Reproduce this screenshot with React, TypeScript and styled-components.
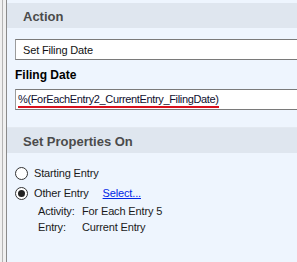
import { createGlobalStyle } from "styled-components";
import styled from "styled-components";

const GlobalStyle = createGlobalStyle`
    html, body {
        margin: 0;
        padding: 0;
        background: #f0f0f0;
    }
    body {
        font-family: "Liberation Sans", Arial, sans-serif;
        font-size: 11px;
        letter-spacing: -0.15px;
        color: #1a1a1a;
    }
`;

const Shell = styled.div`
    display: flex;
    height: 262px;
    width: 297px;
    overflow: hidden;
    padding-left: 2px;
    box-sizing: border-box;
`;

const Rail = styled.div`
    display: flex;
    flex: 1;
    border-left: 1px solid #b4b4b4;
    padding-left: 3px;
`;

const Panel = styled.div`
    flex: 1;
    border-left: 1px solid #8a8a8a;
    background: #eef5fe;
    padding-top: 3px;
    overflow: hidden;
`;

const Header = styled.div`
    height: 25px;
    display: flex;
    align-items: center;
    padding-left: 16px;
    background: #dfe6ef;
    color: #4b4b4b;
    font-size: 13px;
    font-weight: bold;
    letter-spacing: 0;
    padding-top: 1px;
    box-sizing: border-box;
`;

const Section = styled.div<{ height: number }>`
    height: ${(p) => p.height}px;
    padding: 11px 0 0 8px;
    box-sizing: border-box;
    border-bottom: 1px solid #e3e9f1;
`;

const TextBox = styled.div`
    height: 21px;
    margin-right: -6px;
    box-sizing: border-box;
    background: #fff;
    border: 1px solid #7a7a7a;
    border-left-color: #9c9c9c;
    display: flex;
    align-items: center;
    padding-left: 7px;
    white-space: nowrap;
    color: #111;
`;

const ExprBox = styled(TextBox)`
    padding-left: 2px;
    color: #101030;
    letter-spacing: -0.35px;
`;

const Misspelled = styled.span`
    display: inline-block;
    line-height: 13px;
    border-bottom: 2px solid #d8101c;
    margin-top: 2px;
`;

const Label = styled.div`
    height: 29px;
    display: flex;
    align-items: center;
    font-size: 12px;
    font-weight: bold;
    letter-spacing: 0;
    color: #000;
`;

const Options = styled.div`
    padding: 10px 0 0 8px;
    display: flex;
    flex-direction: column;
`;

const OptionRow = styled.div`
    height: 20px;
    display: flex;
    align-items: center;
    gap: 6px;
`;

const Radio = styled.span<{ checked?: boolean }>`
    width: 13px;
    height: 13px;
    box-sizing: border-box;
    border-radius: 50%;
    border: 1px solid #333;
    background: #fff;
    display: flex;
    align-items: center;
    justify-content: center;

    &::after {
        content: "";
        width: 7px;
        height: 7px;
        border-radius: 50%;
        background: ${(p) => (p.checked ? "#222" : "transparent")};
    }
`;

const LinkText = styled.a`
    margin-left: 8px;
    color: #0026e6;
    text-decoration: underline;
    cursor: pointer;
`;

const Details = styled.div`
    display: grid;
    grid-template-columns: 44px auto;
    grid-auto-rows: 16px;
    align-items: center;
    padding: 0 0 0 23px;
`;

function App() {
    return (
        <>
            <GlobalStyle />
            <Shell>
                <Rail>
                    <Panel>
                        <Header>Action</Header>
                        <Section height={100}>
                            <TextBox>Set Filing Date</TextBox>
                            <Label>Filing Date</Label>
                            <ExprBox>
                                <Misspelled>%(ForEachEntry2_CurrentEntry_FilingDate)</Misspelled>
                            </ExprBox>
                        </Section>
                        <Header>Set Properties On</Header>
                        <Options>
                            <OptionRow>
                                <Radio />
                                <span>Starting Entry</span>
                            </OptionRow>
                            <OptionRow>
                                <Radio checked />
                                <span>Other Entry</span>
                                <LinkText>Select...</LinkText>
                            </OptionRow>
                            <Details>
                                <span>Activity:</span>
                                <span>For Each Entry 5</span>
                                <span>Entry:</span>
                                <span>Current Entry</span>
                            </Details>
                        </Options>
                    </Panel>
                </Rail>
            </Shell>
        </>
    );
}

export default App;
